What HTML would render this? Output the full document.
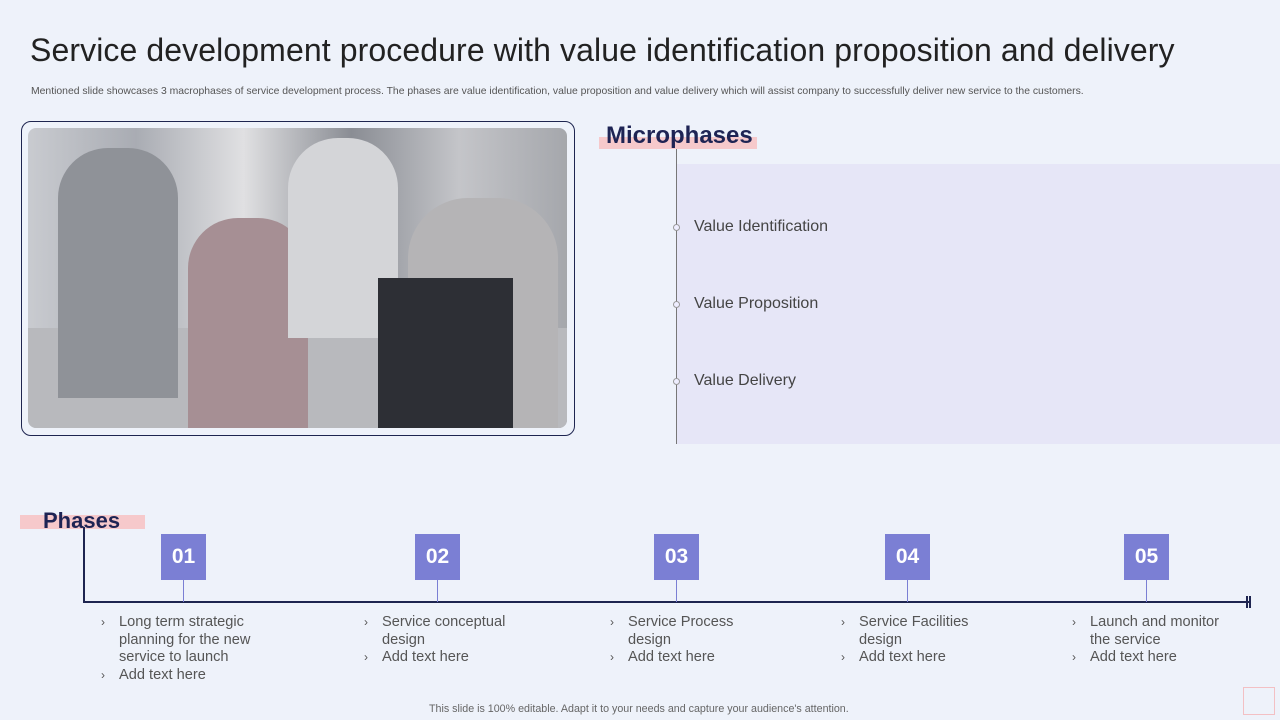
<!DOCTYPE html><html><head><style>
body{margin:0;width:1280px;height:720px;background:#eef2fa;font-family:"Liberation Sans",sans-serif;position:relative;overflow:hidden}
.a{position:absolute}
h1{position:absolute;left:30px;top:32px;margin:0;font-weight:normal;font-size:32px;color:#222;letter-spacing:0.1px;white-space:nowrap}
.sub{left:31px;top:86px;font-size:10.4px;color:#555;white-space:nowrap}
.box{background:#7b7fd4;color:#fff;font-weight:bold;font-size:21px;width:45px;height:46px;text-align:center;line-height:46px}
.li{font-size:14.6px;color:#555;line-height:17.5px}
.li div{position:relative;padding-left:18px}
.li div b{position:absolute;left:0;font-weight:normal;font-size:12px}
.vi{font-size:16px;color:#444}
</style></head><body>
<h1>Service development procedure with value identification proposition and delivery</h1>
<div class="a sub">Mentioned slide showcases 3 macrophases of service development process. The phases are value identification, value proposition and value delivery which will assist company to successfully deliver new service to the customers.</div>
<div class="a" style="left:21px;top:121px;width:552px;height:313px;border:1.5px solid #1e2550;border-radius:10px"></div>
<div class="a" style="left:28px;top:128px;width:539px;height:300px;border-radius:8px;overflow:hidden;background:linear-gradient(90deg,#c9cbd0 0%,#a9acb3 20%,#e0e0e2 40%,#8a8d94 60%,#c4c5c9 80%,#a5a7ac 100%)">
<div class="a" style="left:0;top:200px;width:539px;height:100px;background:#b8b9bd"></div>
<div class="a" style="left:30px;top:20px;width:120px;height:250px;background:#8f9298;border-radius:50px 50px 0 0"></div>
<div class="a" style="left:160px;top:90px;width:120px;height:210px;background:#a68f94;border-radius:50px 50px 0 0"></div>
<div class="a" style="left:260px;top:10px;width:110px;height:200px;background:#d4d5d8;border-radius:50px 50px 0 0"></div>
<div class="a" style="left:380px;top:70px;width:150px;height:230px;background:#b5b4b6;border-radius:60px 60px 0 0"></div>
<div class="a" style="left:350px;top:150px;width:135px;height:150px;background:#2d2f35"></div>
</div>
<div class="a" style="left:677px;top:164px;width:603px;height:280px;background:#e6e6f7"></div>
<div class="a" style="left:676px;top:140px;width:1px;height:304px;background:#777"></div>
<div class="a" style="left:599px;top:137px;width:158px;height:12px;background:#f6c9cb"></div>
<div class="a" style="left:606px;top:122px;font-size:24px;font-weight:bold;color:#1e2454">Microphases</div>
<div class="a vi" style="left:694px;top:218px">Value Identification</div>
<div class="a vi" style="left:694px;top:295px">Value Proposition</div>
<div class="a vi" style="left:694px;top:372px">Value Delivery</div>
<div class="a" style="left:673px;top:224px;width:5px;height:5px;border:1px solid #999;border-radius:50%;background:#eef"></div>
<div class="a" style="left:673px;top:301px;width:5px;height:5px;border:1px solid #999;border-radius:50%;background:#eef"></div>
<div class="a" style="left:673px;top:378px;width:5px;height:5px;border:1px solid #999;border-radius:50%;background:#eef"></div>
<div class="a" style="left:20px;top:515px;width:125px;height:14px;background:#f6c9cb"></div>
<div class="a" style="left:43px;top:508px;font-size:22px;font-weight:bold;color:#1e2454">Phases</div>
<div class="a" style="left:83px;top:527px;width:1.5px;height:75px;background:#1e2550"></div>
<div class="a" style="left:83px;top:601px;width:1167px;height:1.5px;background:#1e2550"></div>
<div class="a" style="left:1246px;top:596px;width:1.5px;height:12px;background:#1e2550"></div>
<div class="a" style="left:1249px;top:596px;width:1.5px;height:12px;background:#1e2550"></div>
<div class="a box" style="left:161px;top:534px">01</div>
<div class="a box" style="left:415px;top:534px">02</div>
<div class="a box" style="left:654px;top:534px">03</div>
<div class="a box" style="left:885px;top:534px">04</div>
<div class="a box" style="left:1124px;top:534px">05</div>
<div class="a" style="left:183px;top:580px;width:1px;height:22px;background:#7b7fd4"></div>
<div class="a" style="left:437px;top:580px;width:1px;height:22px;background:#7b7fd4"></div>
<div class="a" style="left:676px;top:580px;width:1px;height:22px;background:#7b7fd4"></div>
<div class="a" style="left:907px;top:580px;width:1px;height:22px;background:#7b7fd4"></div>
<div class="a" style="left:1146px;top:580px;width:1px;height:22px;background:#7b7fd4"></div>
<div class="a li" style="left:101px;top:614px;width:170px"><div><b>›</b>Long term strategic planning for the new service to launch</div><div><b>›</b>Add text here</div></div>
<div class="a li" style="left:364px;top:614px;width:170px"><div><b>›</b>Service conceptual design</div><div><b>›</b>Add text here</div></div>
<div class="a li" style="left:610px;top:614px;width:150px"><div><b>›</b>Service Process design</div><div><b>›</b>Add text here</div></div>
<div class="a li" style="left:841px;top:614px;width:150px"><div><b>›</b>Service Facilities design</div><div><b>›</b>Add text here</div></div>
<div class="a li" style="left:1072px;top:614px;width:170px"><div><b>›</b>Launch and monitor the service</div><div><b>›</b>Add text here</div></div>
<div class="a" style="left:429px;top:703px;font-size:10.7px;color:#666;white-space:nowrap">This slide is 100% editable. Adapt it to your needs and capture your audience's attention.</div>
<div class="a" style="left:1243px;top:687px;width:30px;height:26px;border:1px solid #f3c0c4"></div>
</body></html>
